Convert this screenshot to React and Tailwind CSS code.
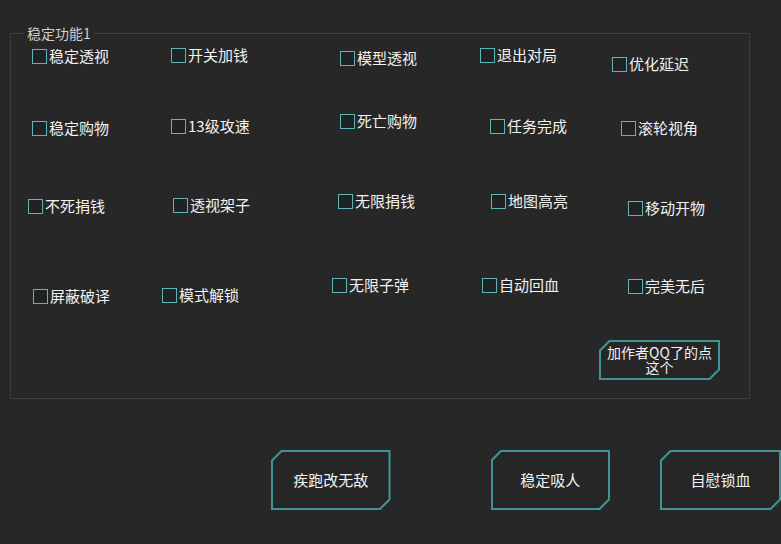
import React from "react";

const font = { fontFamily: '"Noto Sans CJK SC", "Noto Sans", sans-serif' };

// each row: left offset of the first cell, then cells with width + vertical nudge
const rows = [
  {
    className: "h-[66px] pl-[21px]",
    items: [
      { label: "稳定透视", cell: "w-[139px] mt-[1px]" },
      { label: "开关加钱", cell: "w-[169px] mt-0" },
      { label: "模型透视", cell: "w-[140px] mt-[3px]" },
      { label: "退出对局", cell: "w-[132px] mt-0" },
      { label: "优化延迟", cell: "w-[110px] mt-[9px]" },
    ],
  },
  {
    className: "h-[80px] pl-[21px]",
    items: [
      { label: "稳定购物", cell: "w-[139px] mt-[7px]" },
      { label: "13级攻速", cell: "w-[169px] mt-[5px]" },
      { label: "死亡购物", cell: "w-[150px] mt-0" },
      { label: "任务完成", cell: "w-[131px] mt-[5px]" },
      { label: "滚轮视角", cell: "w-[110px] mt-[7px]" },
    ],
  },
  {
    className: "h-[84px] pl-[17px]",
    items: [
      { label: "不死捐钱", cell: "w-[145px] mt-[5px]" },
      { label: "透视架子", cell: "w-[165px] mt-[4px]" },
      { label: "无限捐钱", cell: "w-[153px] mt-0" },
      { label: "地图高亮", cell: "w-[137px] mt-0" },
      { label: "移动开物", cell: "w-[110px] mt-[7px]" },
    ],
  },
  {
    className: "h-[63px] pl-[22px]",
    items: [
      { label: "屏蔽破译", cell: "w-[129px] mt-[11px]" },
      { label: "模式解锁", cell: "w-[170px] mt-[10px]" },
      { label: "无限子弹", cell: "w-[150px] mt-0" },
      { label: "自动回血", cell: "w-[146px] mt-0" },
      { label: "完美无后", cell: "w-[110px] mt-[1px]" },
    ],
  },
];

function Check({ label }) {
  const [on, setOn] = React.useState(false);
  return (
    <label className="flex items-center cursor-default select-none" onClick={() => setOn(!on)}>
      <span className="w-[15px] h-[15px] border border-[#5fb5b5] bg-[#1f2323] flex items-center justify-center shrink-0">
        {on && <span className="w-[7px] h-[7px] bg-[#5fb5b5]" />}
      </span>
      <span className="ml-[2px] text-[15px] leading-[16px] text-[#f2f2f2] whitespace-nowrap">{label}</span>
    </label>
  );
}

function CutButton({ children, className, textClass }) {
  return (
    <button
      className={`bg-[#3f9494] [clip-path:polygon(10px_0,100%_0,100%_calc(100%-10px),calc(100%-10px)_100%,0_100%,0_10px)] p-[2px] ${className}`}
    >
      <div className="w-full h-full bg-[#262626] [clip-path:polygon(9px_0,100%_0,100%_calc(100%-9px),calc(100%-9px)_100%,0_100%,0_9px)] flex items-center justify-center">
        <span className={`text-[#f2f2f2] ${textClass}`}>{children}</span>
      </div>
    </button>
  );
}

export default function App() {
  return (
    <div className="w-[781px] h-[544px] bg-[#272727] overflow-hidden relative" style={font}>
      <div className="pt-[33px] pl-[10px]">
        {/* group box */}
        <div className="relative w-[740px] h-[366px] border border-[#3e3e3e]">
          <span className="absolute left-[13px] -top-[10px] px-[3px] bg-[#272727] text-[14px] leading-[18px] text-[#cfcfcf]">
            稳定功能1
          </span>
          <div className="pt-[13px]">
            {rows.map((row, i) => (
              <div key={i} className={`flex items-start ${row.className}`}>
                {row.items.map((it) => (
                  <div key={it.label} className={`shrink-0 ${it.cell}`}>
                    <Check label={it.label} />
                  </div>
                ))}
              </div>
            ))}
            <div className="flex justify-end pr-[29px]">
              <CutButton className="w-[121px] h-[40px]" textClass="text-[14px] leading-[15px] text-center -mt-[1px]">
                加作者QQ了的点
                <br />
                这个
              </CutButton>
            </div>
          </div>
        </div>
      </div>

      {/* bottom actions */}
      <div className="flex mt-[51px] pl-[271px]">
        <CutButton className="w-[120px] h-[60px]" textClass="text-[15px]">疾跑改无敌</CutButton>
        <CutButton className="w-[120px] h-[60px] ml-[100px]" textClass="text-[15px]">稳定吸人</CutButton>
        <CutButton className="w-[121px] h-[60px] ml-[50px] shrink-0" textClass="text-[15px]">自慰锁血</CutButton>
      </div>
    </div>
  );
}
